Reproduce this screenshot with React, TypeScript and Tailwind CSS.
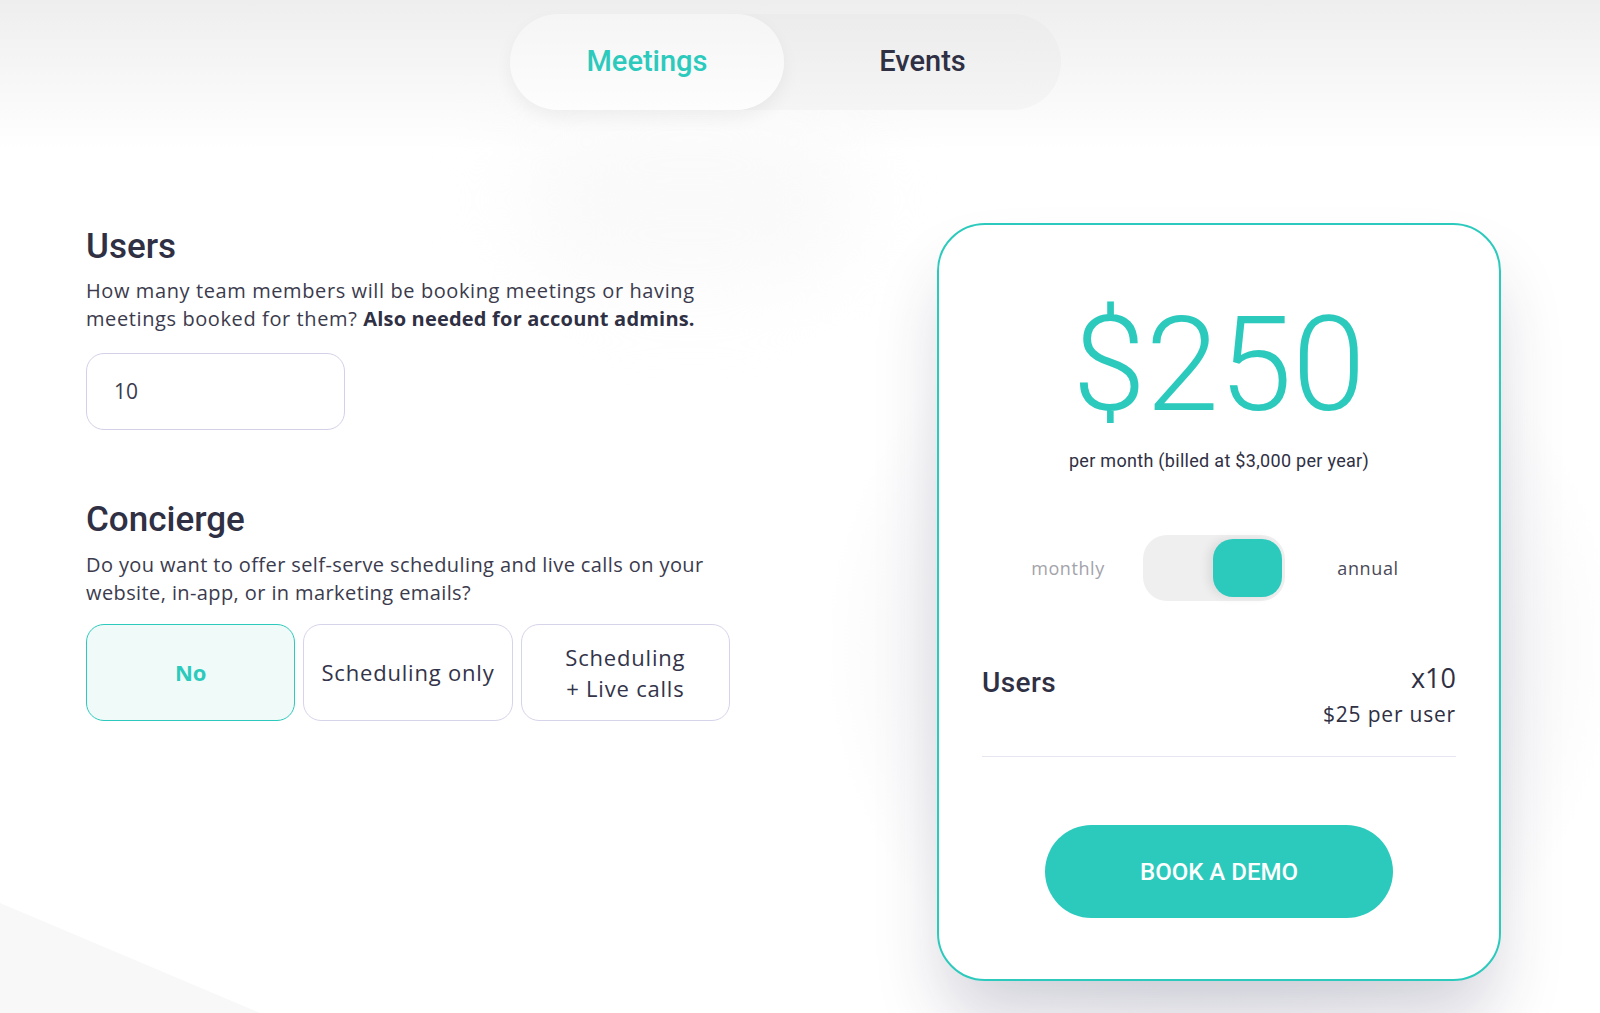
import React from "react";

const teal = "text-[#2ccabd]";
const body = "font-['Open_Sans',sans-serif]";

function Tabs() {
  return (
    <div className="flex pt-[14px] pl-[510px]">
      <div className="flex w-[551px] h-[96px] rounded-full bg-gradient-to-b from-[#ececec] to-[#f5f5f5]">
        <div
          className={`flex w-[274px] h-full items-center justify-center rounded-full bg-gradient-to-b from-[#f5f5f5] to-[#fdfdfd] shadow-[0_8px_18px_rgba(0,0,0,0.05)] text-[29px] font-medium ${teal}`}
        >
          Meetings
        </div>
        <div className="flex flex-1 items-center justify-center text-[29px] font-medium text-[#2f3044]">Events</div>
      </div>
    </div>
  );
}

function Calculator() {
  return (
    <div className="w-[650px] pt-[4px]">
      <h2 className="text-[35px] leading-[40px] font-medium text-[#2f3044]">Users</h2>
      <p className={`mt-[10px] whitespace-nowrap ${body} text-[20px] leading-[28px] tracking-[0.6px] text-[#3b3b4d]`}>
        How many team members will be booking meetings or having
        <br />
        meetings booked for them? <span className="font-bold tracking-[0.2px] text-[#2f3044]">Also needed for account admins.</span>
      </p>
      <div className={`mt-[20px] flex h-[77px] w-[259px] items-center rounded-[18px] border-[1.5px] border-[#d3d1e8] bg-white pl-[27px] ${body} text-[21px] text-[#3b3b4d]`}>
        10
      </div>

      <h2 className="mt-[70px] text-[35px] leading-[40px] font-medium text-[#2f3044]">Concierge</h2>
      <p className={`mt-[11px] whitespace-nowrap ${body} text-[20px] leading-[28px] tracking-[0.4px] text-[#3b3b4d]`}>
        Do you want to offer self-serve scheduling and live calls on your
        <br />
        website, in-app, or in marketing emails?
      </p>
      <div className={`mt-[17px] grid w-[644px] grid-cols-3 gap-[8px] ${body}`}>
        <button className={`h-[97px] rounded-[18px] border-[1.5px] border-[#2ccabd] bg-[#f0faf8] text-[22px] font-bold ${teal}`}>
          No
        </button>
        <button className="h-[97px] rounded-[18px] border-[1.5px] border-[#d6d4ea] bg-white text-[22px] tracking-[0.8px] text-[#33344a]">
          Scheduling only
        </button>
        <button className="h-[97px] rounded-[18px] border-[1.5px] border-[#d6d4ea] bg-white text-[22px] leading-[31px] tracking-[0.8px] text-[#33344a]">
          Scheduling
          <br />+ Live calls
        </button>
      </div>
    </div>
  );
}

function PriceCard() {
  return (
    <div className="ml-auto flex h-[758px] w-[564px] flex-col rounded-[48px] border-2 border-[#2ccabd] bg-white px-[43px] pt-[74px] shadow-[0_45px_70px_-10px_rgba(40,40,80,0.22)]">
      <div className={`text-center text-[132px] leading-none font-light ${teal}`}>$250</div>
      <div className="mt-[18px] text-center text-[18px] leading-[24px] tracking-[0.3px] text-[#2f3044]">
        per month (billed at $3,000 per year)
      </div>

      <div className={`mt-[62px] ml-[11px] flex items-center ${body} text-[18px] tracking-[0.6px]`}>
        <span className="w-[150px] text-center text-[#a3a3ab]">monthly</span>
        <div className="flex h-[66px] w-[142px] items-center justify-end rounded-[24px] bg-[#efefef] pr-[3px]">
          <div className="h-[58px] w-[69px] rounded-[20px] bg-[#2ccabd] shadow-[-5px_0_10px_rgba(0,0,0,0.08)]" />
        </div>
        <span className="w-[166px] text-center text-[#4a4a58]">annual</span>
      </div>

      <div className="mt-[61px] flex justify-between">
        <span className="mt-[5px] text-[28px] leading-[32px] font-medium tracking-[0.4px] text-[#2f3044]">Users</span>
        <div className={`text-right ${body} text-[#2f3044]`}>
          <div className="text-[27px] leading-[32px]">x10</div>
          <div className="mt-[6px] text-[21px] leading-[28px] tracking-[0.8px]">$25 per user</div>
        </div>
      </div>

      <div className="mt-[28px] h-px bg-[#e6e6f0]" />

      <button className="mx-auto mt-[68px] h-[93px] w-[348px] rounded-full bg-[#2ccabd] text-[24px] font-medium text-white">
        BOOK A DEMO
      </button>
    </div>
  );
}

export default function App() {
  return (
    <div className="relative h-[1013px] w-full overflow-hidden bg-white font-['Roboto',sans-serif]">
      {/* soft background shapes */}
      <div className="pointer-events-none absolute inset-x-0 top-0 h-[150px] bg-gradient-to-b from-[#eeeeee] to-white" />
      <div className="pointer-events-none absolute left-[520px] top-[110px] h-[180px] w-[340px] rounded-full bg-[#fafafa] blur-2xl" />
      <div className="pointer-events-none absolute left-[820px] top-[250px] h-[800px] w-[800px] rounded-full bg-[radial-gradient(circle,#eeeef1_0%,#f5f5f7_45%,#ffffff_70%)]" />
      <div className="pointer-events-none absolute bottom-0 left-0 h-[110px] w-[260px] bg-[#f8f8f8] [clip-path:polygon(0_0,100%_100%,0_100%)]" />

      <div className="relative">
        <Tabs />
        <div className="mt-[113px] flex pl-[86px] pr-[99px]">
          <Calculator />
          <PriceCard />
        </div>
      </div>
    </div>
  );
}
